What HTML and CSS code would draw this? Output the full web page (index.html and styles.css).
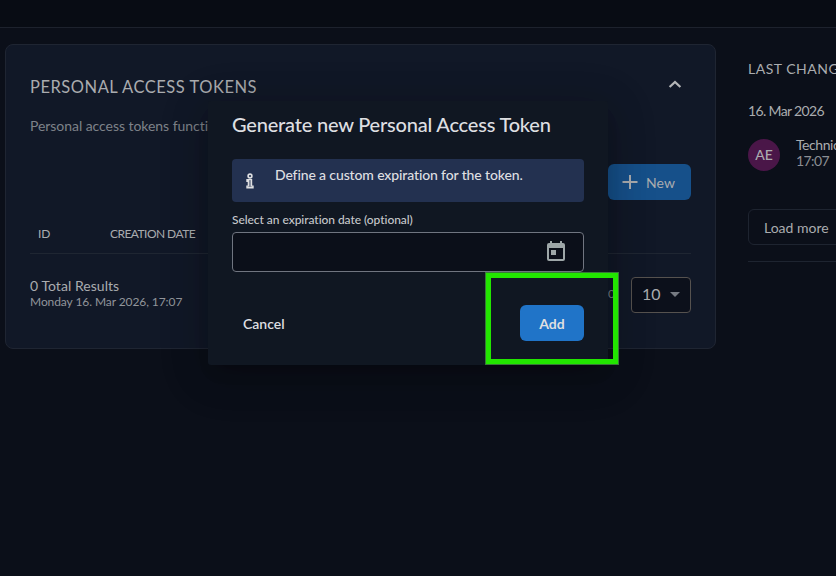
FILE: index.html
```html
<!DOCTYPE html>
<html lang="en">
<head>
<meta charset="utf-8">
<title>Personal Access Tokens</title>
<link rel="stylesheet" href="styles.css">
</head>
<body>
<header class="topbar"></header>
<div class="page">
  <main class="panel">
    <div class="panel-head">
      <h2>PERSONAL ACCESS TOKENS</h2>
      <svg class="chevron" width="14" height="10" viewBox="0 0 14 10"><path d="M1.6 8l5.4-5 5.4 5" fill="none" stroke="currentColor" stroke-width="2.3"/></svg>
    </div>
    <p class="intro">Personal access tokens functi</p>
    <div class="toolbar">
      <button class="new"><svg width="16" height="16" viewBox="0 0 16 16"><path d="M8 1v14M.5 8h15" stroke="currentColor" stroke-width="2"/></svg><span class="new-label">New</span></button>
    </div>
    <div class="table-head"><span class="col-id">ID</span><span class="col-date">CREATION DATE</span></div>
    <div class="table-foot">
      <div class="summary">
        <div class="total">0 Total Results</div>
        <div class="stamp">Monday 16. Mar 2026, 17:07</div>
      </div>
      <div class="pager">
        <span class="range">0</span>
        <div class="select"><span>10</span><svg width="10" height="5" viewBox="0 0 10 5"><path d="M0 0h10L5 5z" fill="currentColor"/></svg></div>
      </div>
    </div>
  </main>
  <aside class="side">
    <h3>LAST CHANGES</h3>
    <div class="day">16. Mar 2026</div>
    <div class="entry">
      <div class="avatar">AE</div>
      <div class="who"><div class="name">Technical</div><div class="time">17:07</div></div>
    </div>
    <button class="more">Load more</button>
    <div class="rule"></div>
  </aside>
</div>
<div class="dialog">
  <h1>Generate new Personal Access Token</h1>
  <div class="info">
    <svg width="8" height="16" viewBox="0 0 8 16"><circle cx="4" cy="3" r="1.9" fill="none" stroke="currentColor" stroke-width="1.6"/><path d="M1 6.7h4.5v6.4H7v1.7H1v-1.7h1.4V8.3H1z" fill="none" stroke="currentColor" stroke-width="1.4"/><path d="M4 8v6" stroke="currentColor" stroke-width=".9"/></svg>
    <span>Define a custom expiration for the token.</span>
  </div>
  <label class="label">Select an expiration date (optional)</label>
  <div class="field">
    <svg width="18" height="20" viewBox="0 0 18 20"><path fill="currentColor" fill-rule="evenodd" d="M3 0h2v2h8V0h2v2h1a2 2 0 0 1 2 2v14a2 2 0 0 1-2 2H2a2 2 0 0 1-2-2V4a2 2 0 0 1 2-2h1zM2 7v11h14V7zM4 9h5v5H4z"/></svg>
  </div>
  <div class="actions"><button class="cancel">Cancel</button><button class="add">Add</button></div>
</div>
<div class="highlight"></div>
</body>
</html>
```
FILE: styles.css
```css
* { box-sizing: border-box; }
body {
  margin: 0; width: 836px; height: 576px; overflow: hidden;
  background: #0b0f19; color: #aaacaf;
  font-family: Lato, "Liberation Sans", sans-serif;
  font-size: 14px; white-space: nowrap; position: relative;
}
h1, h2, h3, p { margin: 0; font-weight: 400; }
button { font: inherit; border: 0; margin: 0; padding: 0; color: inherit; background: none; }
svg { display: block; flex: none; }
.topbar { height: 28px; background: #080c14; border-bottom: 1px solid #1d222d; }
.page { display: flex; align-items: flex-start; padding: 16px 0 0 5px; }
.panel {
  width: 711px; height: 305px; flex: none; padding: 0 24px;
  background: #111827; border: 1px solid #1f2532; border-radius: 8px;
}
.panel-head { display: flex; justify-content: space-between; align-items: center; height: 28px; margin-top: 27px; padding-right: 9px; }
.panel-head h2 { font-size: 16.5px; line-height: 20px; letter-spacing: .52px; padding-top: 1px; }
.chevron { color: #b4b5b7; margin-top: -4px; }
.intro { margin-top: 16px; line-height: 20px; color: #7e8289; letter-spacing: -.05px; }
.toolbar { display: flex; justify-content: flex-end; margin-top: 28px; }
.new {
  display: flex; align-items: center; justify-content: center; gap: 8px;
  width: 83px; height: 36px; padding-right: 2px; border-radius: 6px; background: #16508a; color: #aaacaf;
}
.new-label { padding-top: 1px; }
.table-head { display: flex; height: 54px; padding: 25px 8px 0; font-size: 12px; line-height: 18px; border-bottom: 1px solid #1f2632; }
.col-id { width: 72px; }
.col-date { letter-spacing: -.55px; }
.table-foot { display: flex; justify-content: space-between; padding-top: 23px; }
.total { line-height: 18px; letter-spacing: .05px; }
.stamp { font-size: 12px; line-height: 14px; color: #92959b; letter-spacing: -.08px; }
.pager { display: flex; align-items: center; gap: 16px; height: 36px; }
.range { font-size: 12px; line-height: 14px; padding-bottom: 2px; color: #777b83; }
.select {
  display: flex; align-items: center; gap: 9px; width: 60px; height: 36px; padding: 0 0 3px 10px;
  font-size: 16px; background: #0c101b; border: 1px solid #56524f; border-radius: 4px;
}
.select svg { color: #777b83; margin-top: 1px; }
.side { width: 88px; margin-left: 32px; flex: none; padding-top: 15px; overflow: hidden; }
.side h3 { font-size: 14px; line-height: 20px; letter-spacing: .5px; }
.day { margin-top: 22px; line-height: 20px; letter-spacing: -.65px; }
.entry { display: flex; align-items: center; gap: 16px; margin-top: 18px; height: 32px; }
.avatar { width: 32px; height: 32px; flex: none; border-radius: 50%; background: #4a1648; line-height: 32px; text-align: center; font-weight: 500; }
.name { line-height: 16px; margin-top: -4px; letter-spacing: -.45px; }
.time { line-height: 16px; color: #8b8e94; letter-spacing: -.6px; }
.more { display: block; width: 120px; height: 36px; margin-top: 38px; padding-left: 15px; text-align: left; border: 1px solid #1e2430; border-radius: 6px; line-height: 36px; }
.rule { margin-top: 16px; border-top: 1px solid #1e2430; }
.dialog {
  position: absolute; left: 208px; top: 101px; width: 400px; height: 264px; padding: 0 24px;
  background: #101722; border-radius: 3px; color: #dedfe1;
  box-shadow: 0 11px 15px -7px rgba(0,0,0,.2), 0 9px 46px 8px rgba(0,0,0,.12), 0 8px 38px 3px rgba(0,0,0,.14);
}
.dialog h1 { margin-top: 9px; font-size: 20px; line-height: 28px; font-weight: 500; letter-spacing: -.2px; }
.info { display: flex; gap: 21px; height: 43px; margin-top: 21px; padding: 0 14px; background: #233150; border-radius: 4px; font-weight: 500; letter-spacing: -.13px; }
.info svg { margin-top: 14px; }
.info span { line-height: 32px; }
.label { display: block; margin-top: 9px; line-height: 18px; font-size: 12px; font-weight: 500; color: #c6c8cb; letter-spacing: -.05px; }
.field { display: flex; justify-content: flex-end; height: 40px; margin-top: 3px; padding: 8px 18px 0 0; background: #0b0f19; border: 1px solid #707580; border-radius: 4px; }
.field svg { color: #9ea7a8; }
.actions { display: flex; justify-content: space-between; align-items: center; margin-top: 33px; padding-left: 11px; font-weight: 600; }
.add { width: 64px; height: 36px; border-radius: 6px; background: #2074c8; font-weight: 700; }
.highlight { position: absolute; left: 485px; top: 272px; width: 134px; height: 93px; border: 6px solid #22e600; outline: 1px solid #397839; outline-offset: -1px; }
```
